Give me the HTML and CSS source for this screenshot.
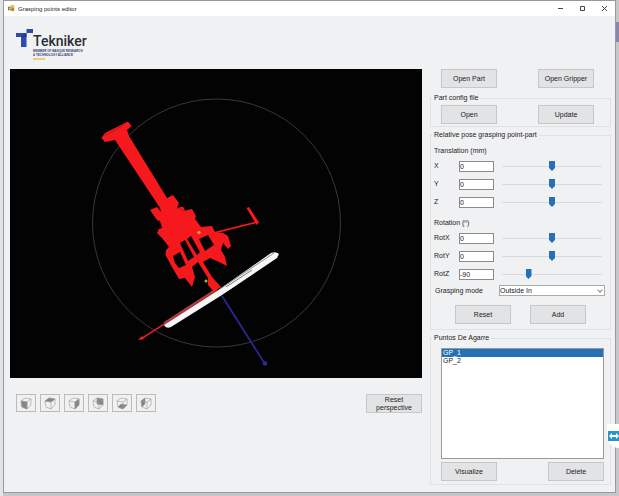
FILE: index.html
```html
<!DOCTYPE html>
<html lang="en">

<head>
    <meta charset="UTF-8">
    <meta name="viewport" content="width=device-width, initial-scale=1.0">
    <title>Grasping points editor</title>
    <link rel="stylesheet" href="styles.css">
</head>

<body>
    <div class="window">
        <header class="titlebar">
            <svg class="app-icon" viewBox="0 0 8 8" aria-hidden="true">
                <rect x="0" y="2" width="4" height="4" fill="#8a6d3b" />
                <rect x="3" y="0" width="4" height="4" fill="#e8c04a" />
                <rect x="4" y="3" width="3" height="4" fill="#b98a2c" />
                <path d="M1 3h2v2H1z" fill="#d9d2c0" />
            </svg>
            <h1>Grasping points editor</h1>
            <div class="window-controls">
                <button type="button" aria-label="Minimize"><svg viewBox="0 0 7 7"><path d="M1 3.5h5" /></svg></button>
                <button type="button" aria-label="Maximize"><svg viewBox="0 0 7 7"><path d="M1.5 1.5h4v4h-4z" /></svg></button>
                <button type="button" aria-label="Close"><svg viewBox="0 0 7 7"><path d="M1 1l5 5M6 1l-5 5" /></svg></button>
            </div>
        </header>

        <div class="content">
            <main class="scene">
                <div class="logo">
                    <svg class="logo-mark" viewBox="0 0 17 18" aria-hidden="true">
                        <path d="M10.500 0H17v4h-6.500z" fill="#2c4fa5" />
                        <path d="M0 4h10.500v14H5V8H0z" fill="#2f4bb0" />
                        <path d="M5 8l5.500-4v4z" fill="#22367f" />
                    </svg>
                    <div class="logo-text">
                        <strong>Tekniker</strong>
                        <small>MEMBER OF BASQUE RESEARCH<br>&amp; TECHNOLOGY ALLIANCE</small>
                        <i></i>
                    </div>
                </div>

                <svg class="viewer" viewBox="10 69 412 309" role="img" aria-label="Part and gripper">
                    <circle cx="216.500" cy="223" r="124" fill="none" stroke="#454545" stroke-width="0.800" />

                    <!-- part -->
                    <g fill="#f5191d">
                        <path d="M101.500 138L105 133L128 121.500L131.500 126L127 130L129 136L167 198L173 195L179 203L177 208L183 206.500L185 210.500L192 209L196 216L195 219L201 227L212 226L215 232L223 233L228 236L231 246L228 249L223 243L221 250L225 257L227 266L219 262L210 258L203 262L212 277L221 287L214 292L208 285L208 278L198 262L192 267L195 277L192 287L185 278L179 279L172 267L165.500 255L166 250L169 247L162 238L157 233L159 229L162 228L160 221L157 220L150 210L157 207L161 212L160 208L115 140L105 142Z" />
                        <path d="M214 232L256 221.500L256.500 223L215 233.500Z" />
                        <path d="M246.500 208L249 207L259 222.500L256.500 225Z" />
                    </g>
                    <path d="M104 136L124 125M177 208L185 211M157 220L160 221" fill="none" stroke="#b10f13" stroke-width="0.700" />
                    <g fill="#050303">
                        <path d="M173 256L180 252L186 265L179 268L175 263Z" />
                        <path d="M180 243L185 240L194 257L188 261Z" />
                        <path d="M187 239L191 236L200 252L197 255Z" />
                        <path d="M199 239L208 235L214 245L205 251Z" />
                    </g>

                    <!-- plate and axes -->
                    <path d="M141 339L217 290" stroke="#d41f24" stroke-width="1.500" />
                    <path d="M138 340L142 336L144 339Z" fill="#e62529" />
                    <path d="M164 325L217 291L271 253Q276 251 279 254L277 258L222 295L171 327Q166 329 164 325Z" fill="#f6f6f6" />
                    <path d="M164 323L215 290" stroke="#a84446" stroke-width="1.500" />
                    <path d="M220 289L274 253" stroke="#8d8d8d" stroke-width="1" />
                    <path d="M226 287L252 270" stroke="#555" stroke-width="0.800" />
                    <path d="M222 296L265 364" stroke="#27278f" stroke-width="1.800" />
                    <circle cx="265" cy="363.500" r="2.200" fill="#2b2ba8" />
                    <circle cx="199" cy="232.500" r="1.600" fill="#e89a52" />
                    <circle cx="206" cy="281" r="1.500" fill="#b9ad35" />
                </svg>

                <div class="toolbar">
                    <div class="views">
                        <button type="button" aria-label="Front view"><svg viewBox="0 0 12 13"><path class="face" d="M1 4L7 5V12L2 10Z" /><path d="M1 4L5 1L11 2L7 5ZM1 4L2 10L7 12L11 8V2M7 5V12" /></svg></button>
                        <button type="button" aria-label="Top view"><svg viewBox="0 0 12 13"><path class="face" d="M1 4L5 1L11 2L7 5Z" /><path d="M1 4L5 1L11 2L7 5ZM1 4L2 10L7 12L11 8V2M7 5V12" /></svg></button>
                        <button type="button" aria-label="Right view"><svg viewBox="0 0 12 13"><path class="face" d="M7 5L11 2V8L7 12Z" /><path d="M1 4L5 1L11 2L7 5ZM1 4L2 10L7 12L11 8V2M7 5V12" /></svg></button>
                        <button type="button" aria-label="Back view"><svg viewBox="0 0 12 13"><path class="face" d="M5 1L11 2V8L5 7Z" /><path d="M1 4L5 1L11 2L7 5ZM1 4L2 10L7 12L11 8V2M7 5V12" /></svg></button>
                        <button type="button" aria-label="Bottom view"><svg viewBox="0 0 12 13"><path class="face" d="M2 10L5 7L11 8L7 12Z" /><path d="M1 4L5 1L11 2L7 5ZM1 4L2 10L7 12L11 8V2M7 5V12" /></svg></button>
                        <button type="button" aria-label="Left view"><svg viewBox="0 0 12 13"><path class="face" d="M1 4L5 1V7L2 10Z" /><path d="M1 4L5 1L11 2L7 5ZM1 4L2 10L7 12L11 8V2M7 5V12" /></svg></button>
                    </div>
                    <button type="button" class="btn">Reset perspective</button>
                </div>
            </main>

            <aside class="panel">
                <div class="buttons top">
                    <button type="button" class="btn">Open Part</button>
                    <button type="button" class="btn">Open Gripper</button>
                </div>

                <fieldset class="config">
                    <legend>Part config file</legend>
                    <div class="buttons">
                        <button type="button" class="btn">Open</button>
                        <button type="button" class="btn">Update</button>
                    </div>
                </fieldset>

                <fieldset class="pose">
                    <legend>Relative pose grasping point-part</legend>
                    <h2>Translation (mm)</h2>
                    <div class="axis">
                        <label for="x">X</label>
                        <input type="text" id="x" value="0">
                        <input type="range" aria-label="X" min="-100" max="100" value="0">
                    </div>
                    <div class="axis">
                        <label for="y">Y</label>
                        <input type="text" id="y" value="0">
                        <input type="range" aria-label="Y" min="-100" max="100" value="0">
                    </div>
                    <div class="axis">
                        <label for="z">Z</label>
                        <input type="text" id="z" value="0">
                        <input type="range" aria-label="Z" min="-100" max="100" value="0">
                    </div>
                    <h2>Rotation (º)</h2>
                    <div class="axis">
                        <label for="rotx">RotX</label>
                        <input type="text" id="rotx" value="0">
                        <input type="range" aria-label="RotX" min="-180" max="180" value="0">
                    </div>
                    <div class="axis">
                        <label for="roty">RotY</label>
                        <input type="text" id="roty" value="0">
                        <input type="range" aria-label="RotY" min="-180" max="180" value="0">
                    </div>
                    <div class="axis">
                        <label for="rotz">RotZ</label>
                        <input type="text" id="rotz" value="-90">
                        <input type="range" aria-label="RotZ" min="-180" max="180" value="-90">
                    </div>
                    <div class="mode">
                        <label for="mode">Grasping mode</label>
                        <span class="dropdown">
                            <select id="mode">
                                <option>Outside In</option>
                                <option>Inside Out</option>
                            </select>
                        </span>
                    </div>
                    <div class="buttons centered">
                        <button type="button" class="btn">Reset</button>
                        <button type="button" class="btn">Add</button>
                    </div>
                </fieldset>

                <fieldset class="points">
                    <legend>Puntos De Agarre</legend>
                    <select class="list" size="8" aria-label="Puntos De Agarre">
                        <option selected>GP_1</option>
                        <option>GP_2</option>
                    </select>
                    <div class="buttons">
                        <button type="button" class="btn">Visualize</button>
                        <button type="button" class="btn">Delete</button>
                    </div>
                </fieldset>
            </aside>
        </div>
    </div>

    <button type="button" class="side-tab" aria-label="Remote session">
        <svg viewBox="0 0 11 10"><path d="M0 0h11v10H0z" fill="#2794cf" /><path d="M1 5l3-3v2h4V2l3 3-3 3V6H4v2z" fill="#fff" /></svg>
    </button>
</body>

</html>
```

FILE: styles.css
```css
* {
    box-sizing: border-box;
}

body {
    margin: 0;
    min-height: 100vh;
    display: flex;
    padding: 0 3px 3px;
    background:
        linear-gradient(#dfe4e7, #dfe4e7) left / 3px 100% no-repeat,
        linear-gradient(#c6c6c9 22px, #8585b0 22px, #8585b0 42px, #c6c6c8 42px);
    font-family: "Liberation Sans", Arial, sans-serif;
    font-size: 7px;
    line-height: 8px;
    color: #222;
}

button,
input,
select {
    font: inherit;
    color: inherit;
    margin: 0;
    padding: 0;
}

svg {
    display: block;
}

.window {
    flex: 1;
    display: flex;
    flex-direction: column;
    border: 1px solid #999;
    background-color: #f0f1f3;
}

/* title bar */
.titlebar {
    display: flex;
    align-items: center;
    gap: 3px;
    height: 15px;
    padding: 0 7px 0 4px;
    background-color: #fff;
}

.app-icon {
    width: 7px;
    height: 7px;
}

.titlebar h1 {
    flex: 1;
    margin: 0;
    font: 6px/8px "Liberation Sans", Arial, sans-serif;
}

.window-controls {
    display: flex;
    gap: 15px;
}

.window-controls button {
    width: 7px;
    border: none;
    background: none;
}

.window-controls path {
    fill: none;
    stroke: #444;
    stroke-width: 1;
}

.content {
    flex: 1;
    display: grid;
    grid-template-columns: minmax(0, 1fr) 181px;
    gap: 8px;
    padding: 0 4px 5px 6px;
}

/* left side */
.logo {
    display: flex;
    align-items: flex-start;
    height: 53px;
    padding: 13px 6px 0;
}

.logo-mark {
    width: 17px;
    height: 18px;
}

.logo-text {
    display: flex;
    flex-direction: column;
    padding-top: 5px;
}

.logo-text strong {
    font: 500 14px/15px Roboto, sans-serif;
    color: #2b2d35;
}

.logo-text small {
    font-size: 3px;
    line-height: 4px;
    font-weight: bold;
    color: #34406e;
}

.logo-text i {
    width: 12px;
    height: 2px;
    margin-top: 1px;
    background-color: #ecd274;
}

.viewer {
    width: 100%;
    background-color: #030303;
}

.toolbar {
    display: flex;
    justify-content: space-between;
    padding: 16px 0 0 6px;
}

.views {
    display: flex;
    gap: 4px;
}

.views button {
    display: grid;
    place-items: center;
    width: 20px;
    height: 18px;
    border: 1px solid #bbb;
    background-color: #f0f0f0;
}

.views svg {
    width: 12px;
    height: 13px;
}

.views path {
    fill: none;
    stroke: #999;
    stroke-width: 0.6;
}

.views .face {
    fill: #858585;
}

.btn {
    width: 56px;
    min-height: 19px;
    border: 1px solid #c6c7c8;
    background-color: #e2e3e4;
}

/* right side */
.buttons {
    display: flex;
    justify-content: space-between;
    padding: 0 16px 0 10px;
}

.buttons.top {
    padding: 53px 17px 0 11px;
}

.buttons.centered {
    justify-content: center;
    gap: 19px;
    padding: 0;
}

fieldset {
    min-width: 0;
    margin: 0;
    padding: 0;
    border: 1px solid #e0e1e2;
}

legend {
    margin-left: 1px;
    padding: 0 2px;
}

.config {
    margin-top: 6px;
    padding-bottom: 2px;
}

.config .buttons {
    padding-top: 3px;
}

.pose {
    margin-top: 4px;
    padding-bottom: 5px;
}

.pose h2 {
    margin: 8px 3px 2px;
    font-size: 7px;
    font-weight: normal;
}

.axis {
    display: grid;
    grid-template-columns: 25px 35px minmax(0, 1fr);
    align-items: center;
    height: 18px;
    padding: 0 8px 0 3px;
}

.axis input[type="text"] {
    width: 35px;
    height: 11px;
    border: 1px solid #8b8b8b;
    background-color: #fff;
}

input[type="range"] {
    appearance: none;
    width: calc(100% - 8px);
    height: 11px;
    margin-left: 8px;
    background: linear-gradient(#d9dadb, #d9dadb) center / 100% 1px no-repeat;
}

input[type="range"]::-webkit-slider-thumb {
    appearance: none;
    width: 6px;
    height: 10px;
    background-color: #2571b8;
    clip-path: polygon(0 0, 100% 0, 100% 70%, 50% 100%, 0 70%);
}

.mode {
    display: flex;
    justify-content: space-between;
    align-items: center;
    padding: 2px 5px 9px 4px;
}

.dropdown {
    position: relative;
    width: 106px;
}

.dropdown::after {
    content: "";
    position: absolute;
    top: 3px;
    right: 3px;
    width: 3px;
    height: 3px;
    border: solid #888;
    border-width: 0 1px 1px 0;
    transform: rotate(45deg);
    pointer-events: none;
}

.dropdown select {
    display: block;
    appearance: none;
    width: 100%;
    height: 11px;
    border: 1px solid #aaa;
    border-radius: 0;
    background-color: #fff;
}

.points {
    margin-top: 4px;
    padding-bottom: 3px;
}

.list {
    display: block;
    width: calc(100% - 16px);
    height: 111px;
    margin: 6px 6px 3px 10px;
    border: 1px solid #999;
    border-radius: 0;
    background-color: #fff;
    overflow: hidden;
}

.list option {
    min-height: 8px;
    padding: 0 1px;
}

.list option:checked {
    color: #fff;
    background: linear-gradient(#2571b8, #2571b8);
}

.points .buttons {
    padding-right: 6px;
}

/* tab docked to the screen edge */
.side-tab {
    position: absolute;
    right: 0;
    top: 424px;
    width: 12px;
    height: 24px;
    border: none;
    border-radius: 3px 0 0 12px;
    background-color: #fff;
}

.side-tab svg {
    width: 11px;
    height: 10px;
    margin-left: 1px;
}
```
